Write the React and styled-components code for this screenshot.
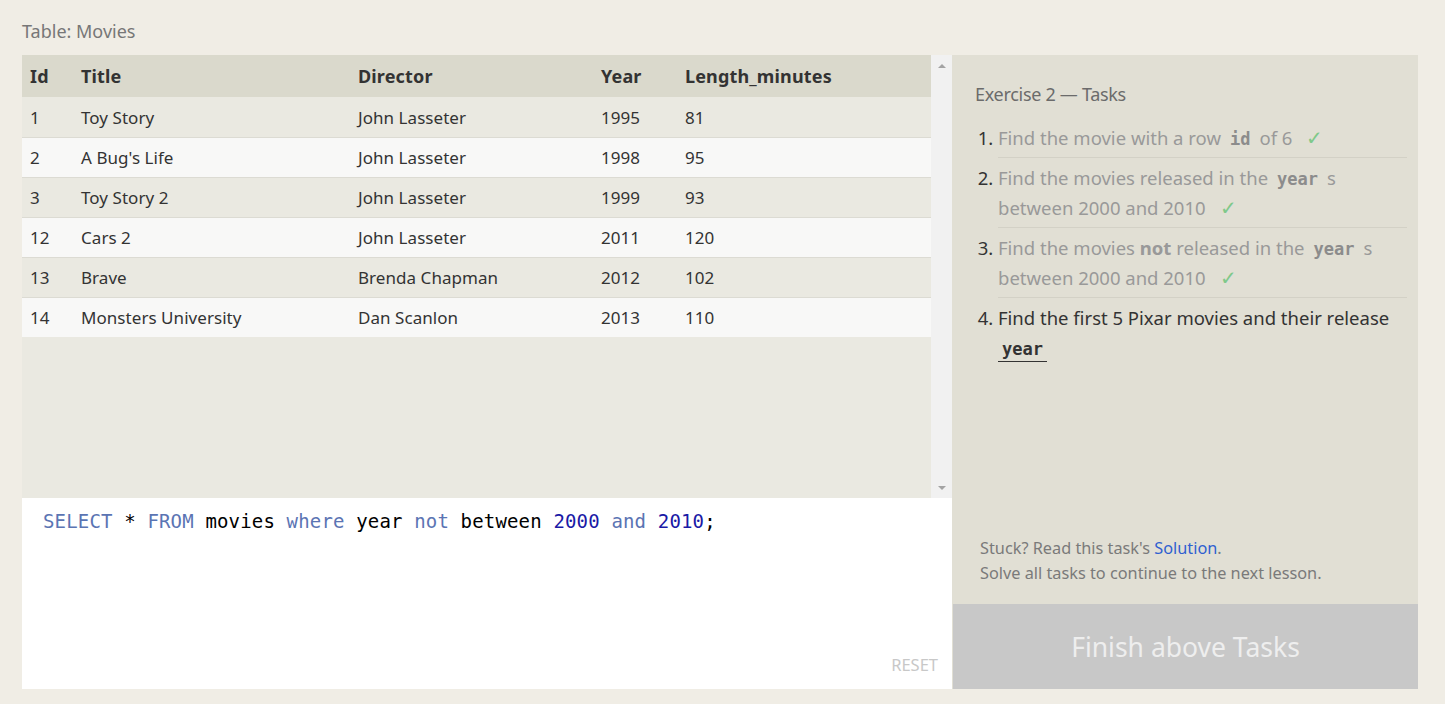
import styled, { createGlobalStyle } from "styled-components";

const GlobalStyle = createGlobalStyle`
  html, body {
    margin: 0;
    padding: 0;
    background: #f0ede5;
  }
  body {
    font-family: "Noto Sans", "Open Sans", sans-serif;
    color: #333;
  }
`;

const Page = styled.div`
  padding: 18px 27px 15px 22px;
`;

const Caption = styled.div`
  font-size: 18px;
  color: #777;
  height: 37px;
  line-height: 26px;
`;

const Frame = styled.div`
  display: flex;
  height: 634px;
`;

const LeftCol = styled.div`
  width: 930px;
  display: flex;
  flex-direction: column;
`;

const TableArea = styled.div`
  height: 443px;
  display: flex;
  background: #eae9e1;
`;

const TableBody = styled.div`
  flex: 1;
`;

const Row = styled.div`
  display: grid;
  grid-template-columns: 51px 277px 243px 84px 1fr;
  height: ${(p) => (p.$head ? "42px" : "40px")};
  align-items: center;
  padding-left: 8px;
  background: ${(p) => (p.$head ? "#dad9cc" : p.$even ? "#f8f8f7" : "#eae9e1")};
  border-top: ${(p) => (p.$head || p.$first ? "none" : "1px solid #dcdbd3")};
  box-sizing: border-box;
  font-size: ${(p) => (p.$head ? "18px" : "17px")};
  font-weight: ${(p) => (p.$head ? 700 : 400)};
  letter-spacing: ${(p) => (p.$head ? "0.15px" : "0.05px")};
  color: #333;
`;

const Scrollbar = styled.div`
  width: 21px;
  background: #f1f1f1;
  display: flex;
  flex-direction: column;
  justify-content: space-between;
  align-items: center;
  padding: 9px 0 8px;
  box-sizing: border-box;
`;

const Arrow = styled.span`
  width: 0;
  height: 0;
  border-left: 4px solid transparent;
  border-right: 4px solid transparent;
  ${(p) =>
    p.$down
      ? "border-top: 4px solid #a3a3a3;"
      : "border-bottom: 4px solid #a3a3a3;"}
`;

const Editor = styled.div`
  flex: 1;
  background: #fff;
  position: relative;
  padding: 11px 21px;
  box-sizing: border-box;
`;

const Code = styled.pre`
  margin: 0;
  font-family: "DejaVu Sans Mono", "Liberation Mono", monospace;
  font-size: 19px;
  letter-spacing: 0.16px;
  line-height: 24px;
  color: #000;
`;

const Tok = styled.span`
  color: ${(p) => (p.$kind === "kw" ? "#5b74b3" : p.$kind === "num" ? "#1a1aa6" : "#000")};
`;

const Reset = styled.span`
  position: absolute;
  right: 14px;
  bottom: 13px;
  font-size: 16.5px;
  color: #c8c8c8;
`;

const RightCol = styled.div`
  width: 466px;
  background: #e1dfd4;
  display: flex;
  flex-direction: column;
`;

const Tasks = styled.div`
  flex: 1;
  padding: 26px 11px 0 23px;
  display: flex;
  flex-direction: column;
`;

const TasksTitle = styled.div`
  font-size: 18px;
  letter-spacing: -0.3px;
  color: #6b6b6b;
  line-height: 26px;
  margin-bottom: 11px;
`;

const List = styled.ol`
  margin: 0;
  padding: 0 0 0 23px;
`;

const Item = styled.li`
  font-size: 18.5px;
  line-height: 30px;
  padding: 5px 0 4px;
  color: ${(p) => (p.$done ? "#999" : "#333")};
  border-bottom: ${(p) => (p.$last ? "none" : "1px solid #d3d1c6")};

  &::marker {
    color: #333;
  }
`;

const Mono = styled.code`
  font-family: "DejaVu Sans Mono", "Liberation Mono", monospace;
  font-weight: 700;
  font-size: 17px;
  line-height: 1;
  margin: 0 9px;
  color: ${(p) => (p.$done ? "#8c8c8c" : "#333")};
  ${(p) =>
    p.$underline
      ? "display: inline-block; line-height: 24px; border-bottom: 1px solid #333; padding: 0 4px; margin: 0;"
      : ""}
`;

const Check = styled.span`
  color: #7fc98a;
  font-size: 20px;
  line-height: 1;
  margin-left: 14px;
`;

const Help = styled.div`
  margin-top: auto;
  padding: 0 0 18px 5px;
  font-size: 16.3px;
  line-height: 25px;
  color: #7a7a7a;
`;

const SolutionLink = styled.a`
  color: #2f5fd0;
  text-decoration: none;
`;

const FinishButton = styled.div`
  height: 85px;
  background: #c8c8c8;
  color: #eeeeee;
  font-size: 26.5px;
  display: flex;
  align-items: center;
  justify-content: center;
  margin-left: 1px;
`;

const movies = [
  [1, "Toy Story", "John Lasseter", 1995, 81],
  [2, "A Bug's Life", "John Lasseter", 1998, 95],
  [3, "Toy Story 2", "John Lasseter", 1999, 93],
  [12, "Cars 2", "John Lasseter", 2011, 120],
  [13, "Brave", "Brenda Chapman", 2012, 102],
  [14, "Monsters University", "Dan Scanlon", 2013, 110],
];

const tokens = [
  ["SELECT", "kw"], [" * ", ""], ["FROM", "kw"], [" movies ", ""], ["where", "kw"],
  [" year ", ""], ["not", "kw"], [" between ", ""], ["2000", "num"], [" ", ""],
  ["and", "kw"], [" ", ""], ["2010", "num"], [";", ""],
];

export default function App() {
  return (
    <Page>
      <GlobalStyle />
      <Caption>Table: Movies</Caption>
      <Frame>
        <LeftCol>
          <TableArea>
            <TableBody>
              <Row $head>
                <span>Id</span>
                <span>Title</span>
                <span>Director</span>
                <span>Year</span>
                <span>Length_minutes</span>
              </Row>
              {movies.map((m, i) => (
                <Row key={m[0]} $even={i % 2 === 1} $first={i === 0}>
                  {m.map((v, j) => (
                    <span key={j}>{v}</span>
                  ))}
                </Row>
              ))}
            </TableBody>
            <Scrollbar>
              <Arrow />
              <Arrow $down />
            </Scrollbar>
          </TableArea>
          <Editor>
            <Code>
              {tokens.map(([t, k], i) => (
                <Tok key={i} $kind={k}>{t}</Tok>
              ))}
            </Code>
            <Reset>RESET</Reset>
          </Editor>
        </LeftCol>
        <RightCol>
          <Tasks>
            <TasksTitle>Exercise 2 — Tasks</TasksTitle>
            <List>
              <Item $done>
                Find the movie with a row<Mono $done>id</Mono>of 6<Check>✓</Check>
              </Item>
              <Item $done>
                Find the movies released in the<Mono $done>year</Mono>s between 2000 and 2010
                <Check>✓</Check>
              </Item>
              <Item $done>
                Find the movies <b>not</b> released in the<Mono $done>year</Mono>s between 2000 and
                2010<Check>✓</Check>
              </Item>
              <Item $last>
                Find the first 5 Pixar movies and their release <Mono $underline>year</Mono>
              </Item>
            </List>
            <Help>
              Stuck? Read this task's <SolutionLink href="#">Solution</SolutionLink>.
              <br />
              Solve all tasks to continue to the next lesson.
            </Help>
          </Tasks>
          <FinishButton>Finish above Tasks</FinishButton>
        </RightCol>
      </Frame>
    </Page>
  );
}
